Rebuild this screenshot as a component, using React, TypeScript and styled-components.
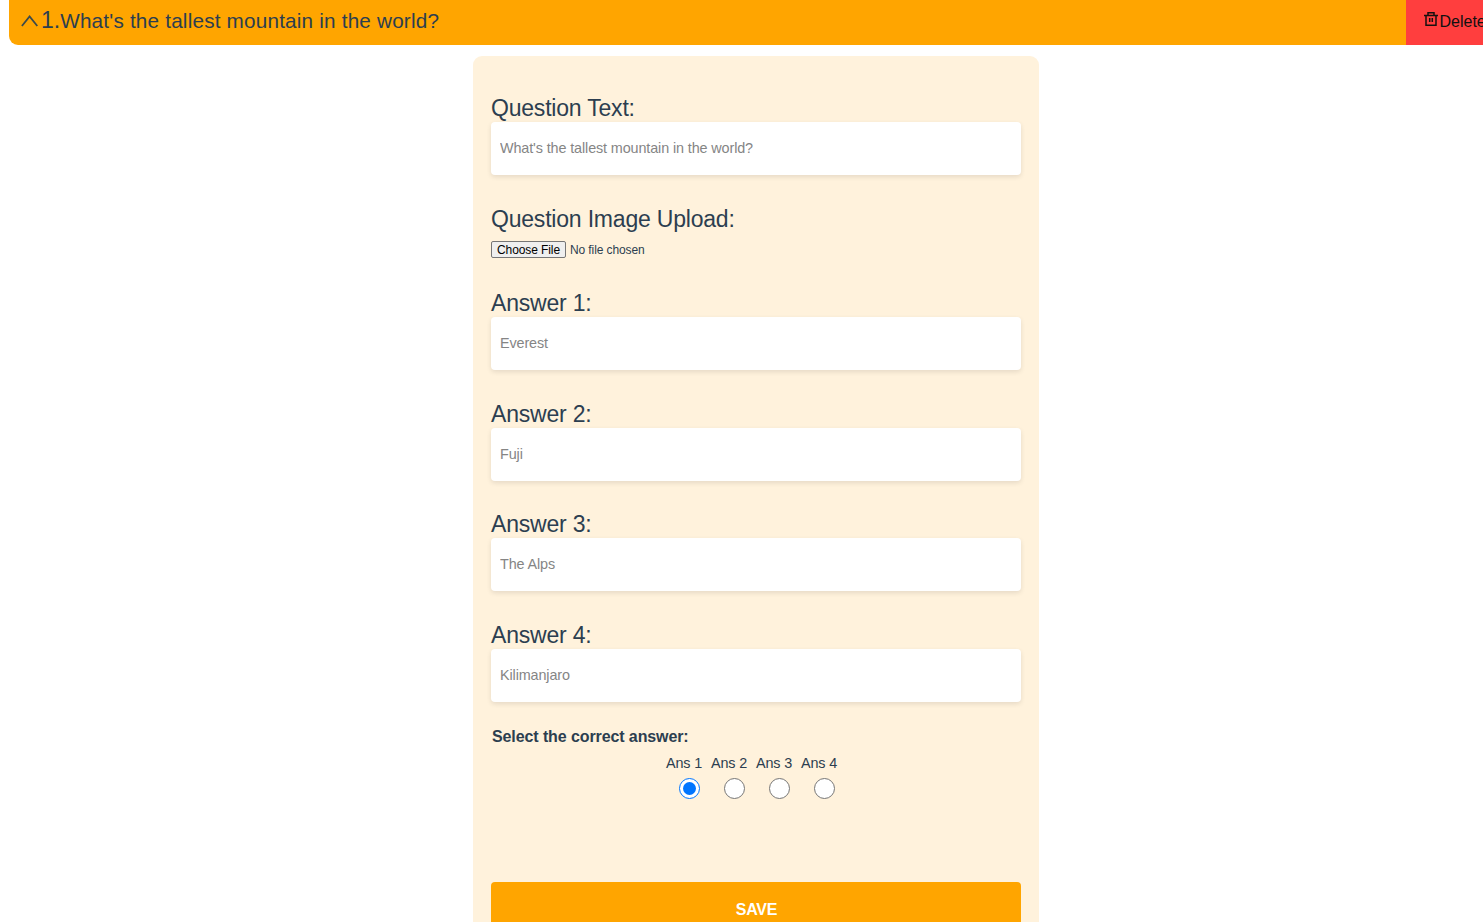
import React, { useState } from "react";
import styled, { createGlobalStyle } from "styled-components";

const GlobalStyle = createGlobalStyle`
  * { box-sizing: border-box; }
  html, body { margin: 0; height: 922px; overflow: hidden; background: #fff; }
  body { font-family: "Liberation Sans", Arial, sans-serif; color: #2c3e50; }
`;

const Page = styled.main`
  display: flex;
  flex-direction: column;
  height: 922px;
  overflow: hidden;
`;

const QuestionBar = styled.header`
  display: flex;
  flex: none;
  height: 45px;
  margin-left: 9px;
  background: #ffa500;
  border-radius: 0 0 0 9px;
`;

const BarTitle = styled.div`
  display: flex;
  flex: 1;
  align-items: baseline;
  padding: 7px 0 0 12px;
  line-height: 27px;
  white-space: nowrap;
`;

const ChevronIcon = styled.svg`
  flex: none;
  width: 18px;
  height: 14px;
  margin-right: 2px;
`;

const BarNumber = styled.span`
  font-size: 23px;
`;

const BarText = styled.span`
  font-size: 20.7px;
  letter-spacing: 0.2px;
`;

const DeleteButton = styled.button`
  display: flex;
  flex: none;
  width: 77px;
  padding: 10px 0 0 17px;
  overflow: hidden;
  border: 0;
  background: #ff3e3e;
  color: #111;
  font-family: inherit;
  font-size: 16px;
  line-height: 24px;
  white-space: nowrap;
`;

const TrashIcon = styled.svg`
  flex: none;
  width: 16px;
  height: 16px;
  margin: 1px 0.5px 0 0;
`;

const Card = styled.form`
  flex: none;
  width: 566px;
  height: 900px;
  margin: 11px 0 0 473px;
  padding: 39px 18px 0;
  border-radius: 9px;
  background: #fff2dc;
`;

const Field = styled.div<{ $height?: number }>`
  display: flex;
  flex-direction: column;
  height: ${(p) => p.$height ?? 110.6}px;
`;

const Label = styled.label`
  height: 27px;
  font-size: 23px;
  letter-spacing: -0.2px;
  line-height: 27px;
  white-space: nowrap;
`;

const TextInput = styled.input`
  width: 530px;
  height: 53px;
  padding: 0 9px 1px;
  border: 0;
  border-radius: 4px;
  background: #fff;
  box-shadow: 0 2px 5px rgba(0, 0, 0, 0.1);
  font-family: inherit;
  font-size: 14.4px;
  letter-spacing: -0.12px;
  outline: 0;
  &::placeholder { color: #858585; opacity: 1; }
`;

const FileRow = styled.div`
  display: flex;
  align-items: center;
  gap: 4px;
  margin-top: 8px;
  font-size: 12px;
  letter-spacing: -0.1px;
`;

const FileButton = styled.button`
  width: 75px;
  height: 17px;
  padding: 1px 0 0;
  border: 1px solid #767676;
  border-radius: 2px;
  background: #efefef;
  color: #000;
  font-family: inherit;
  font-size: 12px;
  letter-spacing: -0.1px;
  line-height: 14px;
`;

const FileStatus = styled.span`
  padding-top: 2px;
`;

const Prompt = styled.p`
  margin: -5px 0 0 1px;
  font-size: 16px;
  font-weight: 700;
  letter-spacing: -0.1px;
  line-height: 20px;
`;

const Options = styled.div`
  display: flex;
  margin: 7px 0 0 171px;
`;

const Option = styled.label`
  display: flex;
  flex-direction: column;
  width: 45px;
  padding-left: 4px;
  font-size: 14.4px;
  letter-spacing: -0.15px;
  line-height: 18px;
  white-space: nowrap;
`;

const Radio = styled.input`
  flex: none;
  appearance: none;
  display: grid;
  place-items: center;
  width: 21px;
  height: 21px;
  margin: 6px 0 0 13px;
  border: 1px solid #767676;
  border-radius: 50%;
  background: #fff;
  &:checked { border-color: #0075ff; }
  &:checked::before {
    content: "";
    width: 13px;
    height: 13px;
    border-radius: 50%;
    background: #0075ff;
  }
`;

const SaveButton = styled.button`
  width: 530px;
  height: 54px;
  margin-top: 83px;
  padding: 1px 0 0 1px;
  border: 0;
  border-radius: 4px;
  background: #ffa500;
  color: #fff;
  font-family: inherit;
  font-size: 16px;
  font-weight: 700;
  letter-spacing: -0.2px;
`;

const answers = ["Everest", "Fuji", "The Alps", "Kilimanjaro"];
const question = "What's the tallest mountain in the world?";

export default function App() {
  const [correct, setCorrect] = useState(0);
  return (
    <Page>
      <GlobalStyle />
      <QuestionBar>
        <BarTitle>
          <ChevronIcon viewBox="0 0 18 14" fill="none" stroke="#3d4a4a" strokeWidth="1.8">
            <path d="M0.9 12 L8.6 2.4 L16.3 12" />
          </ChevronIcon>
          <BarNumber>1.</BarNumber>
          <BarText>{question}</BarText>
        </BarTitle>
        <DeleteButton type="button">
          <TrashIcon viewBox="0 0 16 16" fill="none" stroke="#16100f" strokeWidth="1.5">
            <path d="M1 4.5H15M5 4.5V1.7H11V4.5M3 4.5V14.2H13V4.5M6.7 7V11M9.3 7V11" />
          </TrashIcon>
          Delete
        </DeleteButton>
      </QuestionBar>
      <Card>
        <Field>
          <Label>Question Text:</Label>
          <TextInput placeholder={question} />
        </Field>
        <Field $height={84.4}>
          <Label>Question Image Upload:</Label>
          <FileRow>
            <FileButton type="button">Choose File</FileButton>
            <FileStatus>No file chosen</FileStatus>
          </FileRow>
        </Field>
        {answers.map((answer, i) => (
          <Field key={answer}>
            <Label>Answer {i + 1}:</Label>
            <TextInput placeholder={answer} />
          </Field>
        ))}
        <Prompt>Select the correct answer:</Prompt>
        <Options>
          {answers.map((answer, i) => (
            <Option key={answer}>
              Ans {i + 1}
              <Radio type="radio" name="correct" checked={correct === i} onChange={() => setCorrect(i)} />
            </Option>
          ))}
        </Options>
        <SaveButton type="button">SAVE</SaveButton>
      </Card>
    </Page>
  );
}
